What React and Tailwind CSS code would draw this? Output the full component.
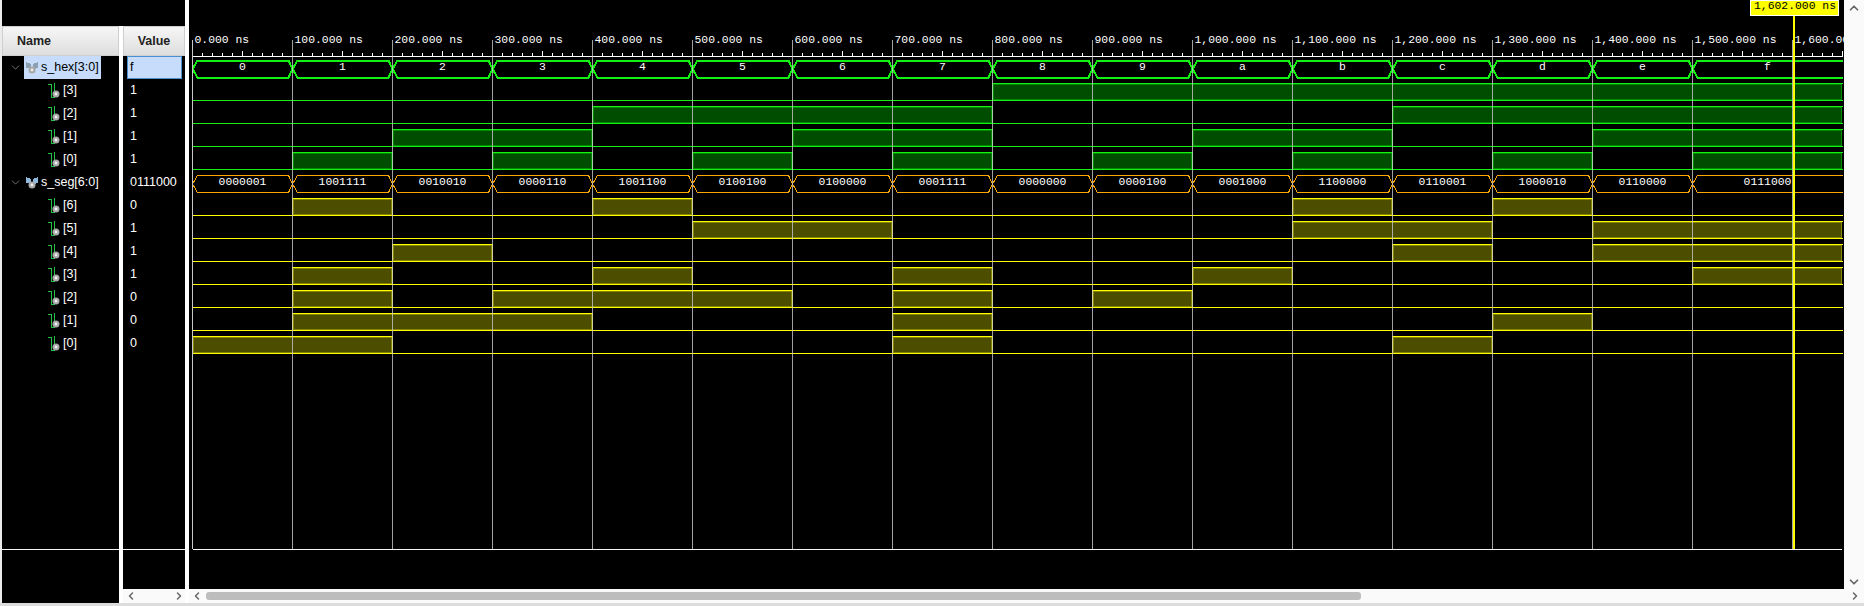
import { ChevronDown, ChevronUp, ChevronLeft, ChevronRight } from 'lucide-react'

const HEX = '0123456789abcdef'.split('')
const SEG = [
  '0000001', '1001111', '0010010', '0000110', '1001100', '0100100', '0100000', '0001111',
  '0000000', '0000100', '0001000', '1100000', '0110001', '1000010', '0110000', '0111000',
]
const END = 1650 // time where the wave stops being drawn (svg x = 3.5 + t)
const X = (t) => 3.5 + t
const rowTop = (k) => 60.5 + 23 * k
const rowLow = (k) => 77.5 + 23 * k

const GREEN = { line: '#14f014', fill: '#004d00', rim: '#008a00' }
const YELLOW = { line: '#ffff00', fill: '#4d4d00', rim: '#858500' }

const hexBits = (i) => (i >> 0).toString(2).padStart(4, '0')

// Time slices for the 16 counter values, the last one runs off to END
const slices = HEX.map((_, i) => [i * 100, i === 15 ? END : (i + 1) * 100])

function BitWave({ k, bits, color }) {
  const runs = []
  bits.forEach((b, i) => {
    if (b !== '1') return
    const last = runs[runs.length - 1]
    if (last && last[1] === slices[i][0]) last[1] = slices[i][1]
    else runs.push([slices[i][0], slices[i][1]])
  })
  return (
    <g>
      <line x1={X(0)} x2={X(END)} y1={rowLow(k)} y2={rowLow(k)} stroke={color.line} />
      {runs.map(([a, b]) => (
        <g key={a}>
          <rect x={X(a) + 1} y={rowTop(k) + 1} width={b - a - 2} height={15} fill={color.fill} stroke={color.rim} />
          <path
            d={`M${X(a)} ${rowLow(k)}V${rowTop(k)}H${X(b)}${b === END ? '' : `V${rowLow(k)}`}`}
            fill="none"
            stroke={color.line}
          />
        </g>
      ))}
    </g>
  )
}

function BusWave({ k, labels, color, width }) {
  const top = rowTop(k)
  const low = rowLow(k)
  const mid = (top + low) / 2
  return (
    <g>
      {slices.map(([a, b], i) => (
        <g key={a}>
          <path
            d={
              b === END
                ? `M${X(b)} ${top}H${X(a) + 5}L${X(a)} ${mid}L${X(a) + 5} ${low}H${X(b)}`
                : `M${X(a)} ${mid}L${X(a) + 5} ${top}H${X(b) - 4}L${X(b)} ${mid}L${X(b) - 4} ${low}H${X(a) + 5}Z`
            }
            fill="none"
            stroke={color}
            strokeWidth={width}
          />
          <text x={X((a + b) / 2)} y={70 + 23 * k} textAnchor="middle" fill="#ffffff" fontSize="11.4">
            {labels[i]}
          </text>
        </g>
      ))}
    </g>
  )
}

function Waveform() {
  const ticks = []
  for (let t = 0; t <= END; t += 10) ticks.push(t)
  const grid = []
  for (let t = 0; t <= 1600; t += 100) grid.push(t)
  return (
    <svg width="1655" height="589" className="block font-['Liberation_Mono',monospace]" shapeRendering="crispEdges">
      {/* ruler */}
      <line x1={X(0)} x2={X(END)} y1="56.5" y2="56.5" stroke="#ffffff" />
      {ticks.map((t) =>
        t % 100 === 0 ? null : (
          <line key={t} x1={X(t)} x2={X(t)} y1={t % 50 === 0 ? 51 : 53} y2="56" stroke="#ffffff" />
        ),
      )}
      {grid.map((t) => (
        <text key={t} x={X(t) + 2} y="43" fill="#ffffff" fontSize="11.4">
          {t >= 1000 ? `${String(t).slice(0, 1)},${String(t).slice(1)}.000 ns` : `${t}.000 ns`}
        </text>
      ))}

      <BusWave k={0} labels={HEX} color={GREEN.line} width={2} />
      {[3, 2, 1, 0].map((bit, n) => (
        <BitWave
          key={bit}
          k={n + 1}
          color={GREEN}
          bits={HEX.map((_, i) => hexBits(i)[3 - bit])}
        />
      ))}
      <BusWave k={5} labels={SEG} color="#ffa500" width={1} />
      {[6, 5, 4, 3, 2, 1, 0].map((bit, n) => (
        <BitWave
          key={bit}
          k={n + 6}
          color={YELLOW}
          bits={SEG.map((s) => s[6 - bit])}
        />
      ))}

      {/* time grid */}
      {grid.map((t) => (
        <line key={t} x1={X(t)} x2={X(t)} y1="40" y2="549" stroke="#c8c8c8" strokeOpacity={t === 0 ? 1 : 0.8} />
      ))}
      <line x1={X(0)} x2="1653" y1="549.5" y2="549.5" stroke="#f4f4f4" />

      {/* cursor */}
      <rect x="1604" y="15" width="2" height="534" fill="#ffff00" />
      <rect x="1561.5" y="0.5" width="88" height="15" fill="#ffff00" stroke="#ffffff" />
      <text x="1606" y="9" textAnchor="middle" fill="#000000" fontSize="11.4">
        1,602.000 ns
      </text>
    </svg>
  )
}

function BusIcon({ dim }) {
  const c = dim ? '#8a9fb0' : '#8fb8dc'
  return (
    <svg width="14" height="14" viewBox="0 0 14 14" className="shrink-0" shapeRendering="crispEdges">
      <path d="M1 1L6 3V8L1 7Z" fill={c} />
      <path d="M13 1L8 3V8L13 7Z" fill={c} />
      <circle cx="7" cy="9" r="3.5" fill="#a8a8a8" shapeRendering="auto" />
      <circle cx="7" cy="9" r="1.4" fill="#ececec" shapeRendering="auto" />
    </svg>
  )
}

function BitIcon() {
  return (
    <svg width="13" height="15" viewBox="0 0 13 15" className="shrink-0" shapeRendering="crispEdges">
      <path d="M0 1.5H3.5V14H7" fill="none" stroke="#22c043" />
      <path d="M6.5 0V8" fill="none" stroke="#22c043" />
      <circle cx="8" cy="11" r="3.5" fill="#a8a8a8" shapeRendering="auto" />
      <circle cx="8" cy="11" r="1.4" fill="#f0f0f0" shapeRendering="auto" />
    </svg>
  )
}

const ROWS = [
  { name: 's_hex[3:0]', value: 'f', bus: true, selected: true },
  { name: '[3]', value: '1' },
  { name: '[2]', value: '1' },
  { name: '[1]', value: '1' },
  { name: '[0]', value: '1' },
  { name: 's_seg[6:0]', value: '0111000', bus: true },
  { name: '[6]', value: '0' },
  { name: '[5]', value: '1' },
  { name: '[4]', value: '1' },
  { name: '[3]', value: '1' },
  { name: '[2]', value: '0' },
  { name: '[1]', value: '0' },
  { name: '[0]', value: '0' },
]

function HeaderCell({ children, className }) {
  return (
    <div className={`h-[30px] flex items-center text-[12.5px] font-bold text-[#222222] bg-gradient-to-b from-[#f6f6f6] to-[#dedede] border border-[#cfcfcf] ${className}`}>
      {children}
    </div>
  )
}

function NameRow({ row }) {
  if (!row.bus) {
    return (
      <div className="h-[23px] flex items-center pl-[46px] gap-[2px] text-white">
        <BitIcon />
        <span>{row.name}</span>
      </div>
    )
  }
  return (
    <div className="h-[23px] flex items-center">
      <ChevronDown className="w-[13px] h-[13px] ml-[7px] mr-[2px] text-[#8a8a8a]" strokeWidth={1.5} />
      <div className={`h-[23px] w-[77px] flex items-center gap-[2px] pl-[1px] ${row.selected ? 'bg-[#c6dcfa] text-black' : 'text-white'}`}>
        <BusIcon dim={row.selected} />
        <span className="whitespace-nowrap">{row.name}</span>
      </div>
    </div>
  )
}

export default function App() {
  return (
    <div className="w-[1864px] h-[606px] flex flex-col overflow-hidden bg-white font-['Liberation_Sans',sans-serif] text-[12.5px]">
      <div className="flex flex-1 min-h-0">
        <div className="w-[2px] bg-[#ececec]" />

        {/* signal names and values */}
        <div className="w-[183px] flex flex-col">
          <div className="h-[26px] bg-black" />
          <div className="flex flex-1 min-h-0">
            <div className="w-[117px] bg-black flex flex-col">
              <HeaderCell className="pl-[14px]">Name</HeaderCell>
              {ROWS.map((row, i) => (
                <NameRow key={i} row={row} />
              ))}
              <div className="h-[195px] border-b border-[#f4f4f4]" />
            </div>
            <div className="w-[4px] bg-white" />
            <div className="w-[62px] bg-black flex flex-col">
              <HeaderCell className="justify-center">Value</HeaderCell>
              {ROWS.map((row, i) =>
                row.selected ? (
                  <div key={i} className="h-[23px] w-[55px] ml-[4px] flex items-center pl-[2px] bg-[#c6dcfa] border border-[#4a90d0] text-black">
                    {row.value}
                  </div>
                ) : (
                  <div key={i} className="h-[23px] flex items-center pl-[7px] text-white">
                    {row.value}
                  </div>
                ),
              )}
              <div className="h-[195px] border-b border-[#f4f4f4]" />
              <div className="flex-1" />
              <div className="h-[14px] bg-[#fafafa] flex items-center justify-between pl-[2px]">
                <ChevronLeft className="w-[12px] h-[12px] text-[#666666]" strokeWidth={3} />
                <ChevronRight className="w-[12px] h-[12px] text-[#666666]" strokeWidth={3} />
              </div>
            </div>
          </div>
        </div>

        <div className="w-[4px] bg-white" />

        {/* waveform */}
        <div className="flex-1 flex flex-col min-w-0">
          <div className="flex flex-1 min-h-0">
            <div className="w-[1655px] bg-black overflow-hidden">
              <Waveform />
            </div>
            <div className="flex-1 bg-[#fafafa] flex flex-col items-center justify-between pt-[1px]">
              <ChevronUp className="w-[14px] h-[14px] text-[#666666]" strokeWidth={3} />
              <ChevronDown className="w-[14px] h-[14px] text-[#666666]" strokeWidth={3} />
            </div>
          </div>
          <div className="h-[14px] bg-[#fafafa] flex items-center pl-[2px] pr-[3px]">
            <ChevronLeft className="w-[12px] h-[12px] text-[#666666]" strokeWidth={3} />
            <div className="ml-[3px] h-[8px] w-[1155px] rounded-[3px] bg-[#bdbdbd]" />
            <div className="flex-1" />
            <ChevronRight className="w-[12px] h-[12px] text-[#666666]" strokeWidth={3} />
          </div>
        </div>
      </div>
      <div className="h-[3px] bg-[#dcdcdc]" />
    </div>
  )
}
